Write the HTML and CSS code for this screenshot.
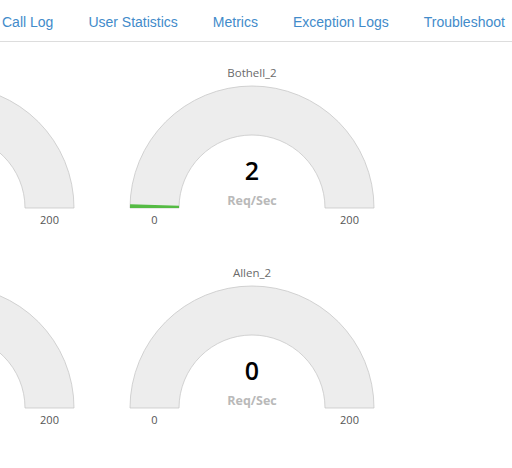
FILE: index.html
```html
<!DOCTYPE html>
<html>
<head>
<meta charset="utf-8">
<link rel="stylesheet" href="styles.css">
</head>
<body>
<nav class="tabs">
  <a class="tab">Call Log</a>
  <a class="tab">User Statistics</a>
  <a class="tab">Metrics</a>
  <a class="tab">Exception Logs</a>
  <a class="tab">Troubleshoot</a>
</nav>
<main class="gauges">
  <div class="gauge">
    <svg width="300" height="200" viewBox="0 0 300 200">
      <text class="g-title" x="150" y="35">Seattle_2</text>
      <path class="g-bg" d="M28 166 A122 122 0 0 1 272 166 L223 166 A73 73 0 0 0 77 166 Z"/>
      <text class="g-value" x="150" y="138">0</text>
      <text class="g-label" x="150" y="163">Req/Sec</text>
      <text class="g-minmax" x="52.5" y="182">0</text>
      <text class="g-minmax" x="247.5" y="182">200</text>
    </svg>
  </div>
  <div class="gauge">
    <svg width="300" height="200" viewBox="0 0 300 200">
      <text class="g-title" x="150" y="35">Bothell_2</text>
      <path class="g-bg" d="M28 166 A122 122 0 0 1 272 166 L223 166 A73 73 0 0 0 77 166 Z"/>
      <path class="g-fill" d="M28 166 A122 122 0 0 1 28.06 162.17 L77.04 163.71 A73 73 0 0 0 77 166 Z"/>
      <text class="g-value" x="150" y="138">2</text>
      <text class="g-label" x="150" y="163">Req/Sec</text>
      <text class="g-minmax" x="52.5" y="182">0</text>
      <text class="g-minmax" x="247.5" y="182">200</text>
    </svg>
  </div>
  <div class="gauge">
    <svg width="300" height="200" viewBox="0 0 300 200">
      <text class="g-title" x="150" y="35">Seattle_1</text>
      <path class="g-bg" d="M28 166 A122 122 0 0 1 272 166 L223 166 A73 73 0 0 0 77 166 Z"/>
      <text class="g-value" x="150" y="138">0</text>
      <text class="g-label" x="150" y="163">Req/Sec</text>
      <text class="g-minmax" x="52.5" y="182">0</text>
      <text class="g-minmax" x="247.5" y="182">200</text>
    </svg>
  </div>
  <div class="gauge">
    <svg width="300" height="200" viewBox="0 0 300 200">
      <text class="g-title" x="150" y="35">Allen_2</text>
      <path class="g-bg" d="M28 166 A122 122 0 0 1 272 166 L223 166 A73 73 0 0 0 77 166 Z"/>
      <text class="g-value" x="150" y="138">0</text>
      <text class="g-label" x="150" y="163">Req/Sec</text>
      <text class="g-minmax" x="52.5" y="182">0</text>
      <text class="g-minmax" x="247.5" y="182">200</text>
    </svg>
  </div>
</main>
</body>
</html>
```
FILE: styles.css
```css
html, body {
  margin: 0;
  padding: 0;
  background: #fff;
  overflow: hidden;
}
.tabs {
  display: flex;
  gap: 35px;
  padding: 12px 0 9px 2px;
  border-bottom: 1px solid #dddddd;
  font-family: "Liberation Sans", Arial, sans-serif;
  font-size: 14px;
  line-height: 20px;
  white-space: nowrap;
}
.tab {
  color: #428bca;
  text-decoration: none;
  flex: none;
}
.gauges {
  display: grid;
  grid-template-columns: 300px 300px;
  grid-auto-rows: 200px;
  margin-left: -198px;
}
.gauge svg {
  display: block;
}
.g-title {
  font-family: "Open Sans", sans-serif;
  font-size: 11.5px;
  fill: #6a6a6a;
  text-anchor: middle;
}
.g-bg {
  fill: #ededed;
  stroke: #c8c8c8;
  stroke-width: 0.8;
}
.g-fill {
  fill: #55bb44;
}
.g-value {
  font-family: "Open Sans", sans-serif;
  font-size: 25px;
  font-weight: 600;
  fill: #010101;
  text-anchor: middle;
}
.g-label {
  font-family: "Open Sans", sans-serif;
  font-size: 12.5px;
  font-weight: bold;
  fill: #b9b9b9;
  text-anchor: middle;
}
.g-minmax {
  font-family: "Open Sans", sans-serif;
  font-size: 11px;
  fill: #555555;
  text-anchor: middle;
}
```
